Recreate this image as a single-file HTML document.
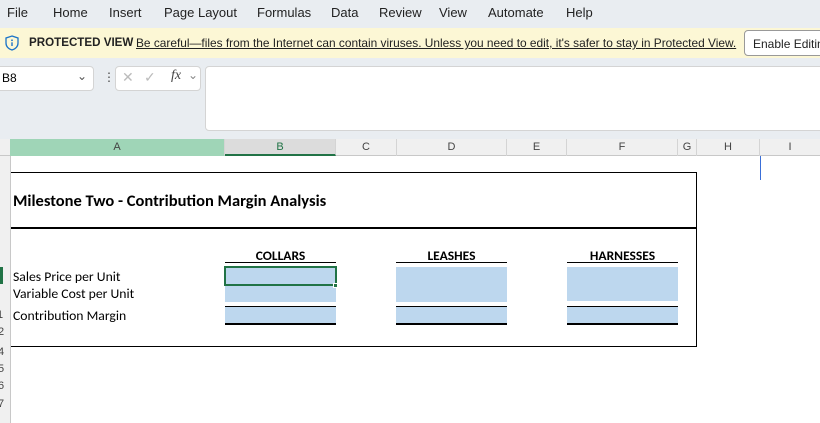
<!DOCTYPE html>
<html><head><style>
*{margin:0;padding:0;box-sizing:border-box}
body{width:820px;height:423px;overflow:hidden;background:#fff;font-family:"Segoe UI","Liberation Sans",sans-serif;position:relative}
.a{position:absolute}
.menu{top:0;left:0;width:820px;height:28px;background:#e9edf1;font-size:13px;color:#222}
.menu span{position:absolute;top:5px}
.pv{top:28px;left:0;width:820px;height:30px;background:#fcf7d5;font-size:11.9px;color:#222}
.fx{top:58px;left:0;width:820px;height:81px;background:#e9edf1}
.colh{top:139px;left:0;width:820px;height:17px;background:#f0f0f0;border-bottom:1px solid #c8c8c8;font-size:11px;color:#444}
.colh div{position:absolute;top:0;height:17px;text-align:center;line-height:17px;border-right:1px solid #d4d4d4}
.rowh{top:156px;left:0;width:11px;height:267px;background:#f0f0f0;border-right:1px solid #c8c8c8;font-size:11px;color:#444;overflow:hidden}
.cal{font-family:"Carlito","Liberation Sans",sans-serif;white-space:nowrap}
.fill{background:#bdd7ee}
</style></head><body>
<div class="a menu">
<span style="left:7px">File</span><span style="left:53px">Home</span><span style="left:109px">Insert</span><span style="left:164px">Page Layout</span><span style="left:257px">Formulas</span><span style="left:331px">Data</span><span style="left:379px">Review</span><span style="left:439px">View</span><span style="left:488px">Automate</span><span style="left:566px">Help</span>
</div>
<div class="a pv">
<svg class="a" style="left:5px;top:7px" width="14" height="16" viewBox="0 0 14 16"><path d="M7 1 L13 3 V8 C13 12 10 14 7 15 C4 14 1 12 1 8 V3 Z" fill="none" stroke="#1a73c8" stroke-width="1.3"/><circle cx="7" cy="5.3" r="0.9" fill="#1a73c8"/><path d="M7 7.3 V11" stroke="#1a73c8" stroke-width="1.4"/></svg>
<span class="a" style="left:29px;top:8px;font-weight:600;font-size:11.6px">PROTECTED VIEW</span>
<span class="a" style="left:136px;top:8px;text-decoration:underline;white-space:nowrap">Be careful—files from the Internet can contain viruses. Unless you need to edit, it's safer to stay in Protected View.</span>
<div class="a" style="left:744px;top:2px;width:90px;height:26px;background:#fff;border:1px solid #999;border-radius:4px;padding:6px 8px;white-space:nowrap;font-size:12px">Enable Editing</div>
</div>
<div class="a fx">
<div class="a" style="left:-4px;top:8px;width:98px;height:25px;background:#fff;border:1px solid #d4d4d4;border-radius:4px;font-size:12px;padding:4px 5px">B8<span class="a" style="left:80px;top:2px;color:#555">⌄</span></div>
<div class="a" style="left:103px;top:12px;font-size:12px;color:#444">⋮</div>
<div class="a" style="left:115px;top:8px;width:86px;height:25px;background:#fff;border:1px solid #d4d4d4;border-radius:4px;color:#bbb;font-size:14px">
<span class="a" style="left:6px;top:2px">✕</span><span class="a" style="left:28px;top:2px">✓</span><span class="a" style="left:55px;top:1px;color:#444;font-family:'Liberation Serif',serif;font-style:italic">fx</span><span class="a" style="left:72px;top:1px;color:#888;font-size:12px">⌄</span></div>
<div class="a" style="left:205px;top:8px;width:620px;height:65px;background:#fff;border:1px solid #d4d4d4;border-radius:4px"></div>
</div>
<div class="a colh">
<div style="left:10px;width:215px;background:#9fd5b7;border-bottom:1px solid #9fd5b7">A</div>
<div style="left:225px;width:111px;background:#dcdcdc;border-bottom:2px solid #217346;color:#217346">B</div>
<div style="left:336px;width:61px">C</div>
<div style="left:397px;width:110px">D</div>
<div style="left:507px;width:60px">E</div>
<div style="left:567px;width:111px">F</div>
<div style="left:678px;width:19px">G</div>
<div style="left:697px;width:63px">H</div>
<div style="left:760px;width:60px;border:none">I</div>
</div>
<div class="a rowh">
<div class="a" style="left:0;top:111px;width:3px;height:17px;background:#217346"></div>
<div class="a" style="left:-3px;top:153px">1</div><div class="a" style="left:-2px;top:170px">2</div>
<div class="a" style="left:-2px;top:190px">4</div><div class="a" style="left:-2px;top:207px">5</div><div class="a" style="left:-2px;top:224px">6</div><div class="a" style="left:-2px;top:242px">7</div>
</div>
<div class="a" style="left:760px;top:156px;width:1px;height:24px;background:#3a6fd8"></div>
<div class="a" style="left:11px;top:172px;width:686px;height:175px;border:1px solid #000;border-left:none"></div>
<div class="a" style="left:11px;top:227px;width:686px;height:2px;background:#000"></div>
<div class="a cal" style="left:13px;top:191px;font-size:16.5px;font-weight:bold">Milestone Two - Contribution Margin Analysis</div>
<div class="a cal" style="left:13px;top:268px;font-size:13.7px">Sales Price per Unit</div>
<div class="a cal" style="left:13px;top:285px;font-size:13.7px">Variable Cost per Unit</div>
<div class="a cal" style="left:13px;top:307px;font-size:13.7px">Contribution Margin</div>

<div class="a cal" style="left:225px;top:247px;width:111px;text-align:center;font-size:13.5px;font-weight:bold">COLLARS</div>
<div class="a cal" style="left:396px;top:247px;width:111px;text-align:center;font-size:13.5px;font-weight:bold">LEASHES</div>
<div class="a cal" style="left:567px;top:247px;width:111px;text-align:center;font-size:13.5px;font-weight:bold">HARNESSES</div>

<div class="a" style="left:225px;top:262px;width:111px;height:1px;background:#000"></div>
<div class="a fill" style="left:225px;top:267px;width:111px;height:35px"></div>
<div class="a" style="left:224px;top:266px;width:113px;height:20px;border:2px solid #217346"></div>
<div class="a" style="left:333px;top:283px;width:5px;height:5px;background:#217346;border:1px solid #fff"></div>
<div class="a" style="left:225px;top:306px;width:111px;height:1px;background:#000"></div>
<div class="a fill" style="left:225px;top:307px;width:111px;height:16px"></div>
<div class="a" style="left:225px;top:323px;width:111px;height:2px;background:#000"></div>

<div class="a" style="left:396px;top:262px;width:111px;height:1px;background:#000"></div>
<div class="a fill" style="left:396px;top:267px;width:111px;height:35px"></div>
<div class="a" style="left:396px;top:306px;width:111px;height:1px;background:#000"></div>
<div class="a fill" style="left:396px;top:307px;width:111px;height:16px"></div>
<div class="a" style="left:396px;top:323px;width:111px;height:2px;background:#000"></div>

<div class="a" style="left:567px;top:262px;width:111px;height:1px;background:#000"></div>
<div class="a fill" style="left:567px;top:267px;width:111px;height:34px"></div>
<div class="a" style="left:567px;top:306px;width:111px;height:1px;background:#000"></div>
<div class="a fill" style="left:567px;top:307px;width:111px;height:16px"></div>
<div class="a" style="left:567px;top:323px;width:111px;height:2px;background:#000"></div>
</body></html>
